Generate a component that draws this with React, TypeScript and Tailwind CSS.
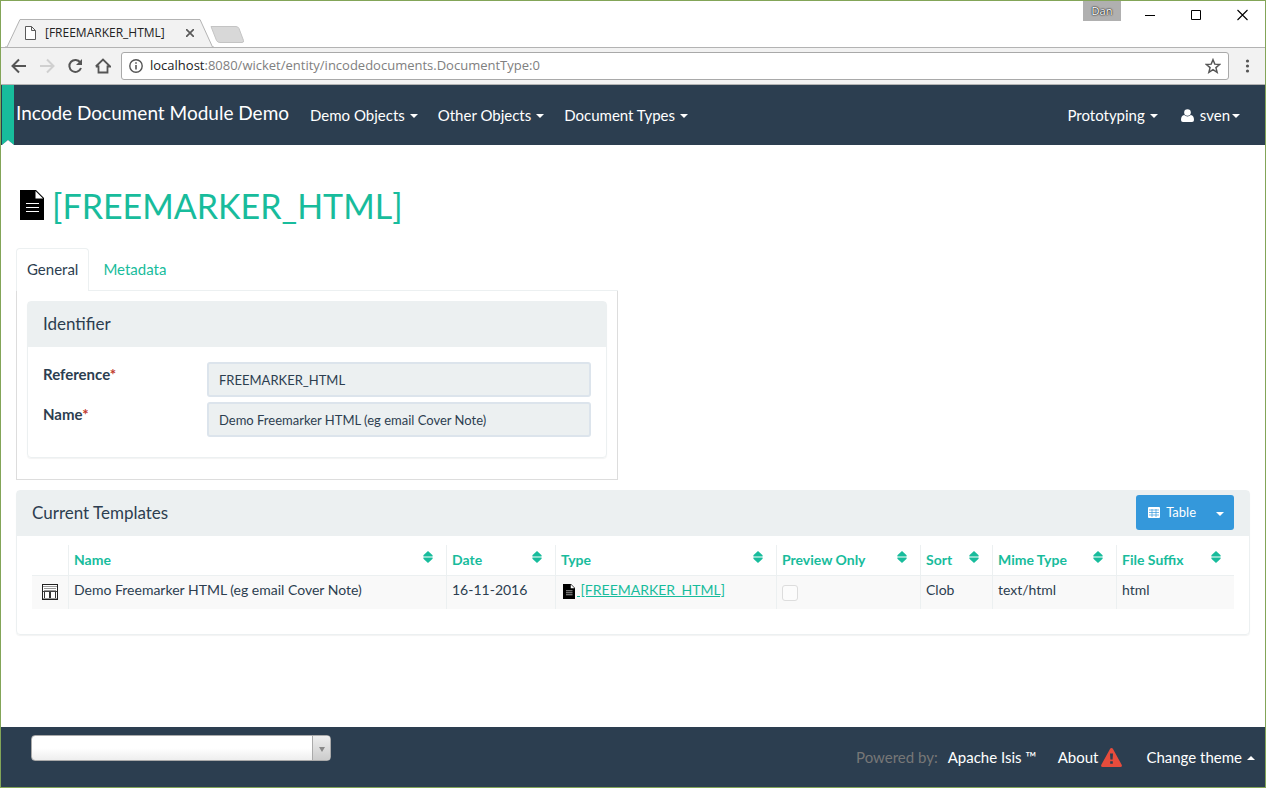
import type { ReactNode } from "react";

const columns = [
  { label: "Date", width: "w-[109px]" },
  { label: "Type", width: "w-[221px]" },
  { label: "Preview Only", width: "w-[144px]" },
  { label: "Sort", width: "w-[72px]" },
  { label: "Mime Type", width: "w-[124px]" },
  { label: "File Suffix", width: "w-[118px]" },
];

function Caret({ up = false }: { up?: boolean }) {
  return (
    <svg viewBox="0 0 8 4" className="mt-[2px] h-1 w-2 shrink-0" fill="currentColor" aria-hidden="true">
      <path d={up ? "M0 4L4 0L8 4Z" : "M0 0H8L4 4Z"} />
    </svg>
  );
}

function DocIcon({ className }: { className: string }) {
  return (
    <svg viewBox="0 0 24 30" className={className} aria-hidden="true">
      <path d="M0 0H16L24 8V30H0Z" fill="#000" />
      <path d="M15.5 1V8.5H23Z" fill="#fff" />
      <path d="M6 13.5H19M6 17.5H19M6 21.5H19" stroke="#fff" strokeWidth="1.2" />
    </svg>
  );
}

function SortIcon() {
  return (
    <svg viewBox="0 0 10 12" className="h-3 w-[10px] shrink-0" fill="#18bc9c" aria-hidden="true">
      <path d="M5 0L9.600 4.200V5.500H.4V4.200ZM.4 6.500H9.600V7.800L5 12L.4 7.800Z" />
    </svg>
  );
}

function TemplateIcon() {
  return (
    <svg viewBox="0 0 16 16" className="h-4 w-4" fill="none" aria-hidden="true">
      <rect x=".5" y=".5" width="15" height="15" fill="#fff" stroke="#222" />
      <path d="M1 2.500H15M2 4.500H14M2 6.500H14" stroke="#999" />
      <path d="M1 7.500H15" stroke="#444" />
      <path d="M2.500 8V14M7.500 8V14M8.500 8V14M13.500 8V14" stroke="#333" />
      <path d="M1 14.500H15" stroke="#999" />
    </svg>
  );
}

function TitleBar() {
  return (
    <div className="flex h-[46px] items-start justify-between bg-white">
      <div className="flex items-end self-end pl-1">
        <div className="relative flex h-7 w-[209px] items-center pr-5 pl-5">
          <svg viewBox="0 0 209 28" className="absolute inset-0 h-7 w-[209px]" aria-hidden="true">
            <path d="M0 28H2L15 .5H195L207.500 28H209V29H0Z" fill="#f2f2f2" stroke="#b3b3b3" />
          </svg>
          <svg viewBox="0 0 11 14" className="relative h-[14px] w-[11px]" fill="#fff" stroke="#5a5a5a" aria-hidden="true">
            <path d="M.5.5H6.500L10.500 4.500V13.500H.5ZM6.500.5V4.500H10.500" />
          </svg>
          <span className="relative ml-[9px] grow text-xs text-[#222]">[FREEMARKER_HTML]</span>
          <button type="button" aria-label="Close tab" className="relative">
            <svg viewBox="0 0 8 8" className="h-2 w-2" stroke="#5a5a5a" strokeWidth="1.7" aria-hidden="true">
              <path d="M0 0L8 8M8 0L0 8" />
            </svg>
          </button>
        </div>
        <button type="button" aria-label="New tab" className="-ml-1 mb-1">
          <svg viewBox="0 0 35 17" className="h-[17px] w-[35px]" aria-hidden="true">
            <path d="M1 .5H26Q28 .5 29 2.500L33.500 14.500Q34 16.500 32 16.500H10Q7.500 16.500 6.500 14.500Z" fill="#d8d8d8" stroke="#c4c4c4" />
          </svg>
        </button>
      </div>
      <div className="flex">
        <span className="mr-6 h-5 w-[38px] bg-[#b0b0b0] text-center text-[11px] leading-5 text-white [text-shadow:0_0_2px_#000,0_0_1px_#000]">
          Dan
        </span>
        <button type="button" aria-label="Minimize" className="mt-2 mr-[35px] h-3 w-[11px]">
          <svg viewBox="0 0 11 12" className="h-3 w-[11px]" stroke="#000" aria-hidden="true"><path d="M0 6.500H10" /></svg>
        </button>
        <button type="button" aria-label="Maximize" className="mt-2 mr-[35px] h-3 w-[11px]">
          <svg viewBox="0 0 11 12" className="h-3 w-[11px]" stroke="#000" fill="none" aria-hidden="true"><path d="M.5 1.500H9.500V10.500H.5Z" /></svg>
        </button>
        <button type="button" aria-label="Close" className="mt-2 mr-[17px] h-3 w-[11px]">
          <svg viewBox="0 0 11 12" className="h-3 w-[11px]" stroke="#000" strokeWidth="1.1" aria-hidden="true"><path d="M.5 1L10.500 11M10.500 1L.5 11" /></svg>
        </button>
      </div>
    </div>
  );
}

function Toolbar() {
  return (
    <div className="flex h-[38px] items-center border-y border-[#b3b3b3] bg-[#f2f2f2] pr-[15px] pl-[10px]">
      <div className="flex gap-3">
        <button type="button" aria-label="Back">
          <svg viewBox="0 0 16 16" className="h-4 w-4" fill="none" stroke="#555" strokeWidth="2" aria-hidden="true"><path d="M15 8H2M8 1.500L1.500 8L8 14.500" /></svg>
        </button>
        <button type="button" aria-label="Forward">
          <svg viewBox="0 0 16 16" className="h-4 w-4" fill="none" stroke="#d0d0d0" strokeWidth="2" aria-hidden="true"><path d="M1 8H14M8 1.500L14.500 8L8 14.500" /></svg>
        </button>
        <button type="button" aria-label="Reload">
          <svg viewBox="0 0 16 16" className="h-4 w-4" fill="none" stroke="#555" strokeWidth="2" aria-hidden="true">
            <path d="M13.300 4.500A6 6 0 1 0 14 10" />
            <path d="M15 1V7H9Z" fill="#555" stroke="none" />
          </svg>
        </button>
        <button type="button" aria-label="Home">
          <svg viewBox="0 0 16 16" className="h-4 w-4" fill="none" stroke="#555" strokeWidth="1.800" aria-hidden="true"><path d="M.8 8.500L8 1.500L15.200 8.500H12.500V14.500H3.500V8.500H.8" /></svg>
        </button>
      </div>
      <div className="ml-[10px] flex h-7 grow items-center rounded-[3px] border border-[#a9a9a9] bg-white px-[7px]">
        <svg viewBox="0 0 14 14" className="h-[14px] w-[14px] shrink-0" fill="none" stroke="#555" strokeWidth="1.400" aria-hidden="true">
          <circle cx="7" cy="7" r="6.200" />
          <path d="M7 6V10.500M7 3.300V4.800" strokeWidth="1.600" />
        </svg>
        <span className="ml-[7px] grow text-[13px] text-[#808080]">
          <span className="text-[#222]">localhost</span>:8080/wicket/entity/incodedocuments.DocumentType:0
        </span>
        <button type="button" aria-label="Bookmark this page">
          <svg viewBox="0 0 24 24" className="h-4 w-4" fill="none" stroke="#555" strokeWidth="2.200" aria-hidden="true">
            <path d="M12 2.500L14.700 9.200L22 9.700L16.400 14.400L18.200 21.500L12 17.600L5.800 21.500L7.600 14.400L2 9.700L9.300 9.200Z" />
          </svg>
        </button>
      </div>
      <button type="button" aria-label="Browser menu" className="ml-4">
        <svg viewBox="0 0 5 14" className="h-[14px] w-[5px]" fill="#555" aria-hidden="true">
          <circle cx="2.500" cy="2" r="1.600" /><circle cx="2.500" cy="7" r="1.600" /><circle cx="2.500" cy="12" r="1.600" />
        </svg>
      </button>
    </div>
  );
}

function NavButton({ children }: { children: ReactNode }) {
  return (
    <button type="button" className="flex items-center gap-[5px] whitespace-nowrap text-[15px] leading-5 text-white">
      {children}
      <Caret />
    </button>
  );
}

function Navbar() {
  return (
    <nav className="flex h-[60px] items-center bg-[#2c3e50]">
      <svg viewBox="0 0 12 60" className="ml-px h-[60px] w-3 shrink-0" aria-hidden="true">
        <path d="M0 0H12V60L6 55L0 60Z" fill="#18bc9c" />
        <path d="M0 60L6 55L12 60Z" fill="#fff" />
      </svg>
      <a href="#home" className="ml-[2px] pb-1 text-[19px] leading-5 text-white">Incode Document Module Demo</a>
      <div className="ml-[21px] flex gap-5">
        <NavButton>Demo Objects</NavButton>
        <NavButton>Other Objects</NavButton>
        <NavButton>Document Types</NavButton>
      </div>
      <div className="mr-[25px] ml-auto flex gap-[23px]">
        <NavButton>Prototyping</NavButton>
        <button type="button" className="flex items-center gap-[2px] text-[15px] leading-5 text-white">
          <svg viewBox="0 0 13 13" className="mr-1 h-[13px] w-[13px]" fill="currentColor" aria-hidden="true">
            <circle cx="6.500" cy="3.500" r="3.300" />
            <path d="M3.200 6Q4.500 7.400 6.500 7.400T9.800 6Q13 6.500 13 11Q13 13 11 13H2Q0 13 0 11Q0 6.500 3.200 6Z" />
          </svg>
          sven
          <Caret />
        </button>
      </div>
    </nav>
  );
}

function Field({ id, label, value }: { id: string; label: string; value: string }) {
  return (
    <div className="flex">
      <label htmlFor={id} className="w-[164px] shrink-0 pt-[2px] text-[15px] leading-5 font-bold">
        {label}
        <span className="text-[#c0392b]">*</span>
      </label>
      <input
        id={id}
        readOnly
        value={value}
        className="h-[35px] min-w-0 grow rounded-[3px] border-2 border-[#dce4ec] bg-[#ecf0f1] px-[10px] text-[13px] outline-none"
      />
    </div>
  );
}

function GeneralPanel() {
  return (
    <section className="w-1/2 pr-[15px]">
      <div role="tablist" className="flex h-[43px] text-[15px]">
        <button type="button" role="tab" aria-selected="true" className="rounded-t-[4px] border border-b-0 border-[#ecf0f1] px-[10px] pb-px">
          General
        </button>
        <button type="button" role="tab" aria-selected="false" className="grow border-b border-[#ecf0f1] pl-[14px] text-left text-[#18bc9c]">
          Metadata
        </button>
      </div>
      <div className="border border-t-0 border-[#ddd] px-[10px] pt-[10px] pb-[21px]">
        <div className="rounded-[4px] border border-[#ecf0f1] shadow-[0_1px_1px_rgba(0,0,0,0.05)]">
          <h2 className="h-[45px] bg-[#ecf0f1] px-[15px] text-[17px] leading-[44px]">Identifier</h2>
          <div className="flex flex-col gap-[5px] px-[15px] pt-[15px] pb-5">
            <Field id="reference" label="Reference" value="FREEMARKER_HTML" />
            <Field id="name" label="Name" value="Demo Freemarker HTML (eg email Cover Note)" />
          </div>
        </div>
      </div>
    </section>
  );
}

function HeaderCell({ label }: { label: string }) {
  return (
    <th className="border-b border-l border-[#ecf0f1] pr-[13px] pl-[5px] text-left font-bold text-[#18bc9c]">
      <div className="flex items-center justify-between">
        <a href="#sort">{label}</a>
        <span className="pb-[6px]"><SortIcon /></span>
      </div>
    </th>
  );
}

function TemplatesPanel() {
  const cell = "border-l border-[#ecf0f1] pt-1 pl-[5px]";
  return (
    <section className="mt-[10px] rounded-[4px] border border-[#ecf0f1] shadow-[0_1px_1px_rgba(0,0,0,0.05)]">
      <header className="flex h-[45px] items-center justify-between bg-[#ecf0f1] px-[15px] pb-[2px]">
        <h2 className="text-[17px] leading-5">Current Templates</h2>
        <div className="flex h-[35px] rounded-[3px] bg-[#3498db] text-[13px] text-white">
          <button type="button" className="flex items-center gap-[6px] pr-[10px] pl-3">
            <svg viewBox="0 0 12 11" className="h-[11px] w-3" aria-hidden="true">
              <rect width="12" height="11" rx="1" fill="#fff" />
              <path d="M1 3H11M1 5.500H11M1 8H11M4 2V10M8 2V10" stroke="#3498db" strokeWidth=".7" fill="none" />
            </svg>
            Table
          </button>
          <button type="button" aria-label="Choose view" className="px-[10px]"><Caret /></button>
        </div>
      </header>
      <div className="px-[15px] pt-[9px] pb-[25px]">
        <table className="w-full table-fixed border-separate border-spacing-0 text-sm leading-5">
          <colgroup>
            <col className="w-9" />
            <col />
            {columns.map((c) => <col key={c.label} className={c.width} />)}
          </colgroup>
          <thead>
            <tr className="h-[31px]">
              <th className="border-b border-[#ecf0f1]" aria-label="Icon" />
              <HeaderCell label="Name" />
              {columns.map((c) => <HeaderCell key={c.label} label={c.label} />)}
            </tr>
          </thead>
          <tbody>
            <tr className="h-[33px] bg-[#f9f9f9] align-top">
              <td className="pt-2 pl-[10px]"><TemplateIcon /></td>
              <td className={cell}>Demo Freemarker HTML (eg email Cover Note)</td>
              <td className={cell}>16-11-2016</td>
              <td className={cell}>
                <a href="#document-type" className="flex pl-[2px] text-[#18bc9c]">
                  <DocIcon className="mt-1 mr-[2px] h-[15px] w-3 shrink-0" />
                  <span className="whitespace-pre underline"> [FREEMARKER_HTML]</span>
                </a>
              </td>
              <td className="border-l border-[#ecf0f1] pt-[9px] pl-[5px]">
                <input type="checkbox" aria-label="Preview only" className="block h-4 w-4 appearance-none rounded-[3px] border border-[#ddd] bg-[#fcfcfc]" />
              </td>
              <td className={cell}>Clob</td>
              <td className={cell}>text/html</td>
              <td className={cell}>html</td>
            </tr>
          </tbody>
        </table>
      </div>
    </section>
  );
}

function Footer() {
  return (
    <footer className="mt-auto flex h-[60px] items-start justify-between bg-[#2c3e50] pr-[10px] pl-[30px] text-[15px] leading-5 text-white">
      <div className="mt-2 flex h-[26px] w-[300px] overflow-hidden rounded-[4px] border border-[#aaa] bg-linear-to-b from-white from-50% to-[#eee]">
        <select aria-label="Bookmarks" className="min-w-0 grow appearance-none outline-none" />
        <span className="pointer-events-none flex w-[18px] items-center justify-center border-l border-[#aaa] bg-linear-to-b from-[#eee] to-[#ccc] text-[#888]">
          <svg viewBox="0 0 6 5" className="mt-[3px] h-[5px] w-[6px]" fill="currentColor" aria-hidden="true"><path d="M0 0H6L3 5Z" /></svg>
        </span>
      </div>
      <div className="mt-5 flex items-center">
        <span className="mr-[10px] text-[#777]">Powered by:</span>
        <a href="#isis" className="mr-[21px]">Apache Isis ™</a>
        <a href="#about" className="mr-6 flex items-center gap-[3px]">
          About
          <svg viewBox="0 0 21 19" className="h-[19px] w-[21px]" aria-hidden="true">
            <path d="M10.500 0Q11.500 0 12 1L20.800 17Q21.300 19 19.500 19H1.500Q-.3 19 .2 17L9 1Q9.500 0 10.500 0Z" fill="#e74c3c" />
            <path d="M9 5.500H12L11.600 11.500H9.400ZM9.200 13.200H11.800V15.800H9.200Z" fill="#2c3e50" />
          </svg>
        </a>
        <button type="button" className="flex items-center gap-[5px]">
          Change theme
          <Caret up />
        </button>
      </div>
    </footer>
  );
}

export default function App() {
  return (
    <div className="flex min-h-screen flex-col border border-[#83a558] bg-white font-['Lato',sans-serif] text-[#2c3e50]">
      <div className="font-['Open_Sans',sans-serif]">
        <TitleBar />
        <Toolbar />
      </div>
      <Navbar />
      <main className="px-[15px]">
        <h1 className="mt-9 flex h-12 items-center gap-2 pl-1 text-[34px] text-[#18bc9c]">
          <DocIcon className="h-[30px] w-6 shrink-0" />
          [FREEMARKER_HTML]
        </h1>
        <div className="mt-[19px]"><GeneralPanel /></div>
        <TemplatesPanel />
      </main>
      <Footer />
    </div>
  );
}
